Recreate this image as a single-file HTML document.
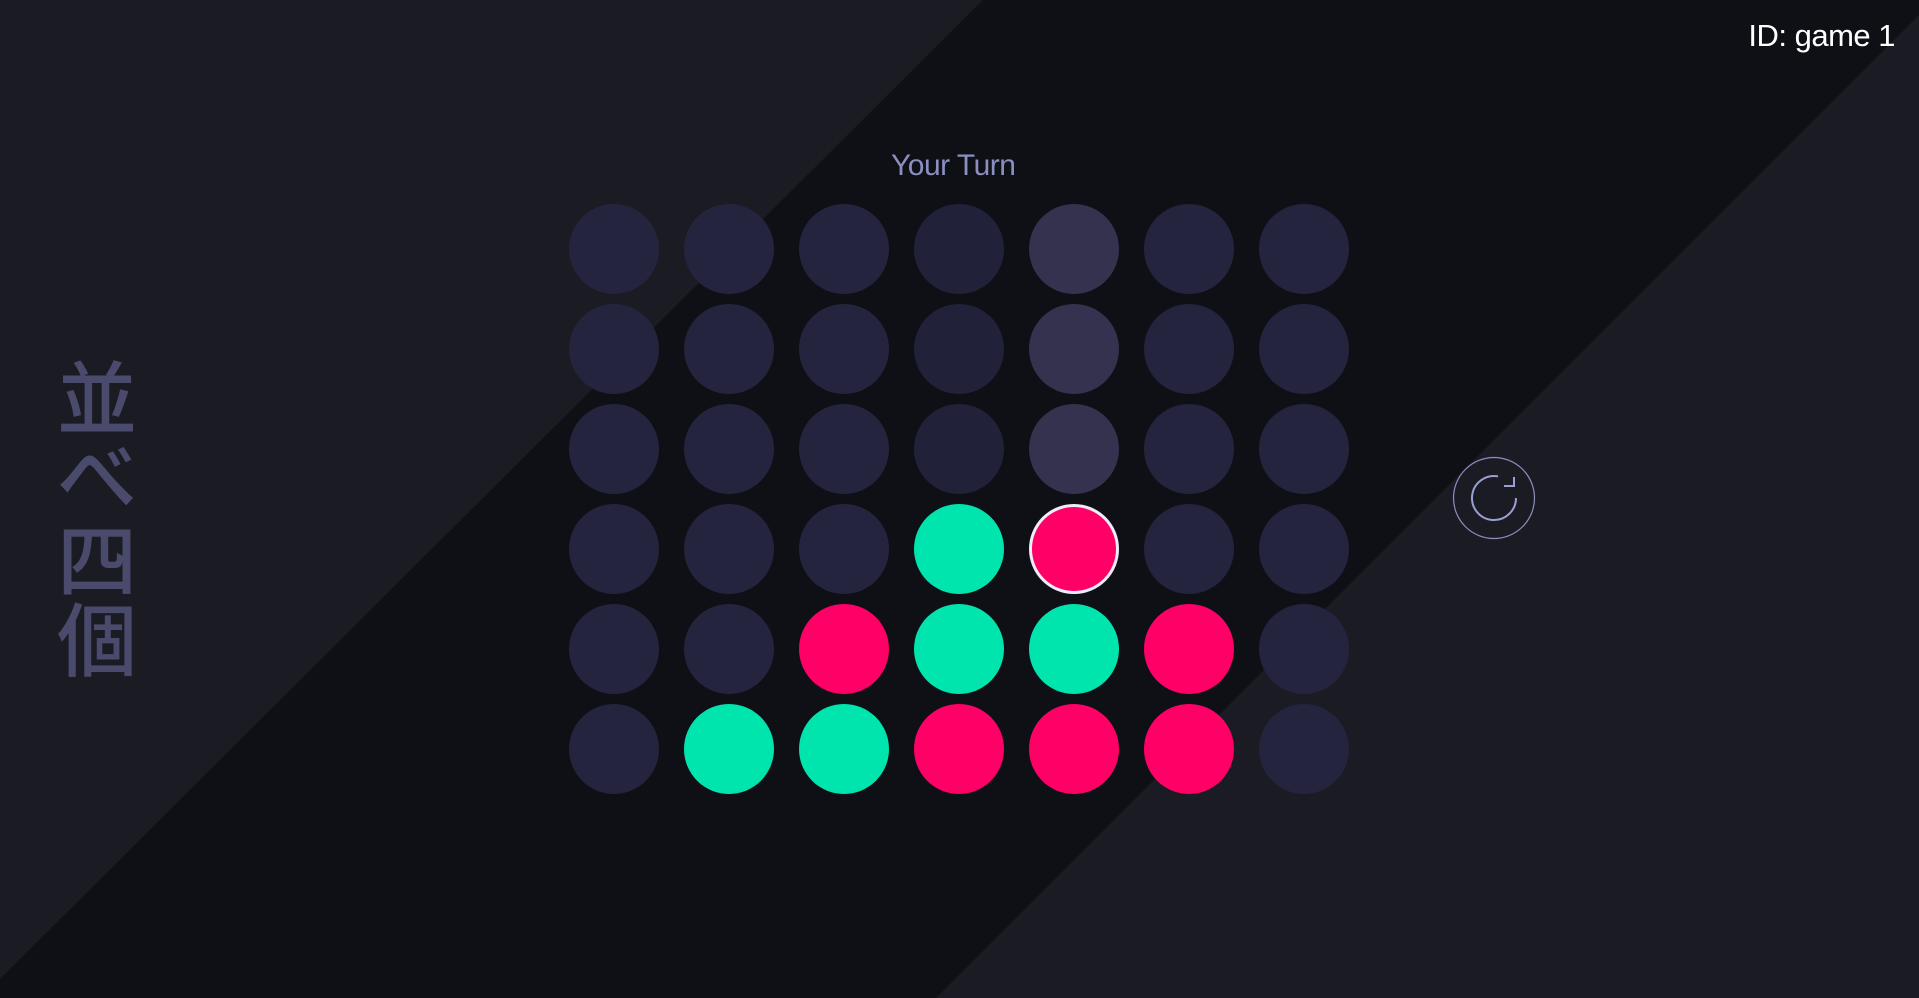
<!DOCTYPE html>
<html><head><meta charset="utf-8"><style>
html,body{margin:0;padding:0;width:1919px;height:998px;overflow:hidden;background:#1b1b24;font-family:"Liberation Sans","Noto Sans CJK JP",sans-serif;}
.bg{position:absolute;left:0;top:0}
.c{position:absolute;width:90px;height:90px;border-radius:50%;background:#24243e;box-sizing:border-box}
.h{background:#34324f}
.d{background:#22213a}
.g{background:#00e5ad}
.p{background:#ff0066}
.sel{border:3px solid #f0ecf8}
#turn{position:absolute;left:891px;top:149px;font-size:30px;color:#8a8fc0;letter-spacing:-0.5px}
#id{position:absolute;right:24px;top:18px;font-size:31px;color:#fff;letter-spacing:-0.5px}
.k{position:absolute;left:57px;width:80px;text-align:center;font-family:"Noto Sans CJK JP",sans-serif;font-weight:500;font-size:80px;line-height:80px;color:#4a4a6c}
</style></head><body>
<svg class="bg" width="1919" height="998"><polygon points="983,0 1919,0 1919,15 936,998 0,998 0,979" fill="#0f1016"/></svg>
<div id="id">ID: game 1</div>
<div id="turn">Your Turn</div>
<div class="k" style="top:354px">並</div>
<div class="k" style="top:432px">べ</div>
<div class="k" style="top:516px">四</div>
<div class="k" style="top:596px">個</div>
<svg style="position:absolute;left:1452px;top:456px" width="84" height="84" viewBox="0 0 84 84">
<circle cx="42" cy="42" r="40.5" fill="none" stroke="#8a8fc0" stroke-width="1.2"/>
<path d="M46 20.4 A22 22 0 1 0 64 42" fill="none" stroke="#9ba0d4" stroke-width="2"/>
<path d="M62 21 L62 30 L52 30" fill="none" stroke="#9ba0d4" stroke-width="2"/>
</svg>
<div id="board"></div>
<script>
var g=[
"eeedhee",
"eeedhee",
"eeedhee",
"eeegGee",
"eepggpe",
"eggpppe"];
var h='';
for(var r=0;r<6;r++)for(var c=0;c<7;c++){
var ch=g[r][c],cl='c';
if(ch=='h')cl+=' h';else if(ch=='d')cl+=' d';else if(ch=='g')cl+=' g';else if(ch=='p')cl+=' p';else if(ch=='G')cl+=' p sel';
h+='<div class="'+cl+'" style="left:'+(569+c*115)+'px;top:'+(204+r*100)+'px"></div>';}
document.getElementById('board').innerHTML=h;
</script>
</body></html>
